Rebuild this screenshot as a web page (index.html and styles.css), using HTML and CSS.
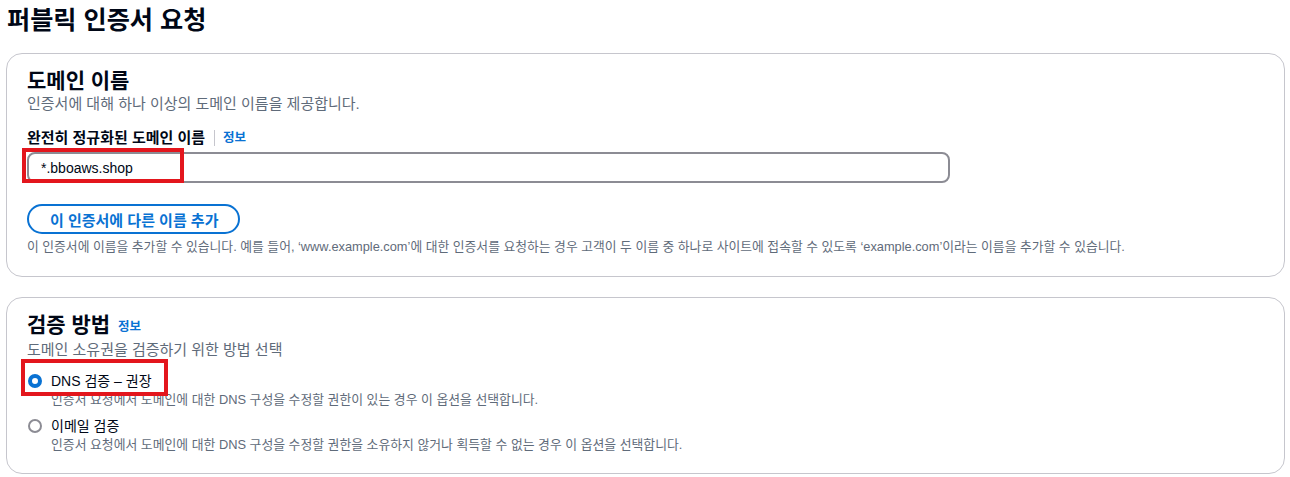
FILE: index.html
```html
<!DOCTYPE html>
<html lang="ko">
<head>
    <meta charset="UTF-8">
    <meta name="viewport" content="width=device-width, initial-scale=1.0">
    <title>퍼블릭 인증서 요청</title>
    <link rel="stylesheet" href="styles.css">
</head>
<body>
    <div class="page">
        <h1 class="page-title">퍼블릭 인증서 요청</h1>

        <section class="card">
            <h2 class="card-title">도메인 이름</h2>
            <p class="card-desc">인증서에 대해 하나 이상의 도메인 이름을 제공합니다.</p>

            <div class="field-label">
                <span>완전히 정규화된 도메인 이름</span>
                <span class="sep"></span>
                <a class="info" href="#">정보</a>
            </div>
            <div class="input-wrap">
                <input class="text-input" type="text" value="*.bboaws.shop">
                <div class="mark mark-input"></div>
            </div>

            <button class="btn-outline">이 인증서에 다른 이름 추가</button>
            <p class="hint">이 인증서에 이름을 추가할 수 있습니다. 예를 들어, ‘www.example.com’에 대한 인증서를 요청하는 경우 고객이 두 이름 중 하나로 사이트에 접속할 수 있도록 ‘example.com’이라는 이름을 추가할 수 있습니다.</p>
        </section>

        <section class="card">
            <h2 class="card-title">검증 방법 <a class="info" href="#">정보</a></h2>
            <p class="card-desc">도메인 소유권을 검증하기 위한 방법 선택</p>

            <div class="radio-group">
                <label class="radio-item">
                    <span class="radio-row">
                        <span class="radio checked"></span>
                        <span class="radio-label">DNS 검증 – 권장</span>
                        <span class="mark mark-radio"></span>
                    </span>
                    <span class="radio-desc">인증서 요청에서 도메인에 대한 DNS 구성을 수정할 권한이 있는 경우 이 옵션을 선택합니다.</span>
                </label>
                <label class="radio-item">
                    <span class="radio-row">
                        <span class="radio"></span>
                        <span class="radio-label">이메일 검증</span>
                    </span>
                    <span class="radio-desc">인증서 요청에서 도메인에 대한 DNS 구성을 수정할 권한을 소유하지 않거나 획득할 수 없는 경우 이 옵션을 선택합니다.</span>
                </label>
            </div>
        </section>
    </div>
</body>
</html>
```

FILE: styles.css
```css
body {
    margin: 0;
    padding: 0;
    background-color: #fff;
    color: #000716;
    font-family: "Liberation Sans", "Noto Sans CJK KR", sans-serif;
}
.page {
    padding: 0 5px 0 6px;
}
.page-title {
    margin: 0 0 18px 1px;
    padding-top: 5px;
    font-size: 25.2px;
    line-height: 30px;
    font-weight: 700;
}
.card {
    border: 1px solid #c6c6cd;
    border-radius: 16px;
    padding: 14px 20px 20px;
    margin-bottom: 20px;
}
.card-title {
    margin: 0;
    font-size: 21px;
    line-height: 26px;
    font-weight: 700;
}
.card-title .info {
    margin-left: 2px;
    vertical-align: 1px;
}
.card-desc {
    margin: 0;
    font-size: 15px;
    line-height: 20px;
    color: #5f6b7a;
}
.field-label {
    display: flex;
    align-items: center;
    margin-top: 14px;
    font-size: 15px;
    line-height: 20px;
    font-weight: 700;
}
.sep {
    width: 1px;
    height: 16px;
    background-color: #c6c6cd;
    margin: 0 8px 0 9px;
}
.info {
    color: #0972d3;
    font-size: 12.5px;
    font-weight: 700;
    text-decoration: none;
}
.input-wrap {
    position: relative;
    width: 923px;
    margin-top: 4px;
}
.text-input {
    display: block;
    box-sizing: border-box;
    width: 100%;
    height: 31px;
    padding: 0 12px;
    border: 2px solid #8c8c94;
    border-radius: 8px;
    font-family: inherit;
    font-size: 14px;
    color: #000716;
}
.mark {
    position: absolute;
    border: 4px solid #e3161d;
    box-sizing: border-box;
    pointer-events: none;
}
.mark-input {
    left: -5px;
    top: -4px;
    width: 162px;
    height: 35px;
}
.btn-outline {
    display: block;
    margin-top: 21px;
    height: 30px;
    padding: 0 20px 0 21px;
    border: 2px solid #0972d3;
    border-radius: 20px;
    background-color: #fff;
    color: #0972d3;
    font-family: inherit;
    font-size: 15px;
    font-weight: 700;
    cursor: pointer;
}
.hint {
    margin: 4px 0 0;
    font-size: 12.8px;
    line-height: 18px;
    color: #5f6b7a;
}
.radio-group {
    margin-top: 10px;
}
.radio-item {
    display: flex;
    flex-direction: column;
}
.radio-item + .radio-item {
    margin-top: 7px;
}
.radio-row {
    position: relative;
    display: flex;
    align-items: center;
    height: 22px;
}
.radio {
    box-sizing: border-box;
    width: 14px;
    height: 14px;
    margin: 0 9px 0 1px;
    border: 2px solid #8c8c94;
    border-radius: 50%;
    background-color: #fff;
}
.radio.checked {
    border: 4px solid #0972d3;
}
.radio-label {
    font-size: 14px;
    line-height: 20px;
}
.radio-desc {
    padding-left: 24px;
    font-size: 12.85px;
    line-height: 16px;
    color: #5f6b7a;
}
.mark-radio {
    left: -6px;
    top: -11px;
    width: 147px;
    height: 37px;
}
```
